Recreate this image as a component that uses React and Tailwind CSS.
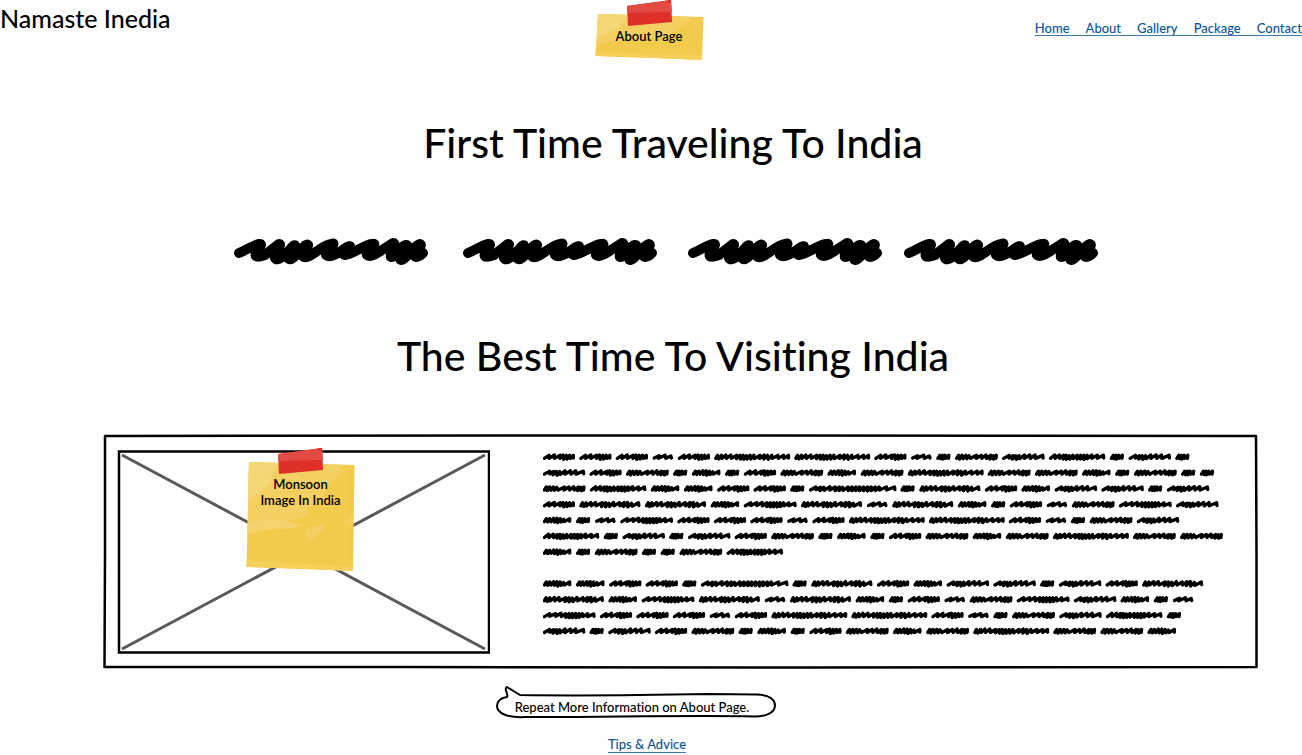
const WORDS = {
  a: { advance: 18.8, points: '4,4 10,-5 12,5 18,-5 19,6 26,-5 27,4 37,-5 36,4' },
  b: { advance: 25.5, points: '5,3 20,-4 18,4 38,-5 40,4 55,-3 57,3' },
  c: { advance: 33.2, points: '4,4 10,-5 14,5 20,-5 24,4 32,-6 34,5 42,-6 44,7 52,-5 54,5 62,-3 64,4 80,-5 80,3' },
  d: { advance: 36.5, points: '4,4 18,-5 18,4 34,-6 34,4 52,-5 51,4 60,-6 62,7 70,-5 72,6 80,-5 82,4 91,-5 91,3' },
  e: { advance: 47.1, points: '4,4 10,-5 13,6 20,-5 24,5 31,-5 35,5 41,-4 46,4 64,-5 63,4 78,-5 80,4 92,-6 94,4 106,-5 104,6 114,-4 115,6 123,-5 122,4' },
  f: { advance: 46.7, points: '4,4 20,-5 20,3 32,-4 30,6 40,-4 42,7 50,-4 52,5 66,-6 66,4 82,-6 84,4 98,-6 99,4 121,-5 122,3' },
  g: { advance: 57.1, points: '4,4 20,-5 20,3 38,-5 38,3 54,-6 55,4 68,-5 68,6 78,-5 78,7 88,-5 88,7 98,-5 99,7 108,-5 109,6 118,-5 120,4 134,-5 134,4 152,-4 153,3' },
  h: { advance: 60.9, points: '4,4 17,-6 18,4 31,-6 32,4 43,-5 42,6 51,-5 52,7 60,-4 62,6 71,-5 72,5 84,-5 84,6 94,-5 94,6 104,-5 104,7 114,-5 114,5 128,-6 128,4 145,-5 145,4 163,-5 164,3' },
  i: { advance: 65.7, points: '4,4 9,-5 13,6 20,-5 22,4 34,-6 36,4 48,-6 50,4 68,-5 66,6 78,-5 78,7 88,-4 90,6 102,-6 104,4 120,-5 121,4 134,-6 132,6 144,-6 145,7 156,-4 158,5 177,-5 178,3' },
  j: { advance: 80, points: '4,4 9,-5 13,6 21,-5 23,4 34,-6 36,4 49,-6 51,4 66,-5 66,5 77,-5 78,6 86,-5 88,7 96,-4 98,6 107,-5 109,6 118,-5 120,5 136,-5 135,4 149,-6 148,6 159,-5 161,7 172,-5 174,4 190,-5 191,4 207,-5 208,4 222,-5 222,3' },
  k: { advance: 91.5, points: '4,4 20,-5 20,3 34,-4 32,6 44,-4 45,5 62,-6 62,4 78,-5 78,6 90,-5 90,6 100,-4 102,5 116,-5 117,6 128,-5 128,6 140,-5 140,6 151,-5 151,6 163,-5 163,6 175,-5 175,7 186,-5 186,6 198,-5 199,6 210,-5 211,4 232,-5 232,4 256,-5 257,3' },
};

const LINES = [
  'dddbdjjdbaefhafa',
  'fdeacadecejeecaeaa',
  'ehccddakaidcffaf',
  'diicgibicadbegf',
  'cabgdddbdjjdbaef',
  'hafafdeacadecejee',
  'caeaaeh',
  '',
  'ccddakaidcffafdi',
  'icgibicadbegfcab',
  'gdddbdjjdbaefha',
  'fafdeacadecejeec',
];

function RedactedCopy() {
  return (
    <svg viewBox="0 0 690 192" className="h-[192px] w-[690px] shrink-0" role="img" aria-label="Scribbled paragraphs">
      <g fill="none" stroke="#000" strokeWidth="10" strokeLinecap="round" strokeLinejoin="round">
        {LINES.map((line, row) => {
          let x = 0;
          return [...line].map((key, n) => {
            const at = x;
            x += WORDS[key].advance;
            return (
              <polyline
                key={`${row}-${n}`}
                points={WORDS[key].points}
                transform={`translate(${at} ${7 + row * 15.83}) scale(0.3333)`}
              />
            );
          });
        })}
      </g>
    </svg>
  );
}

function Scribble() {
  return (
    <svg viewBox="0 0 195 28" className="h-7 w-[195px]" role="img" aria-label="Scribbled text">
      <path
        d="M5 16 C12 13 20 8 25 7 C30 6 24 12 22 16 C20 21 25 20 31 18 L45 7 C49 6 40 17 41 21 C43 25 50 20 59 9 C66 5 52 19 55 22 C59 24 66 12 72 8 C79 5 66 18 70 20 C76 22 88 8 97 7 C105 4 91 15 92 18 C95 21 104 17 113 10 C122 6 106 17 111 18 C119 17 130 8 138 7 C146 5 131 15 133 18 C137 22 149 12 159 6 C164 6 155 18 157 20 C161 21 166 9 172 8 C178 8 163 22 167 23 C171 24 180 8 186 7 C190 8 178 19 182 20 C186 20 188 17 189 16"
        fill="none"
        stroke="#000"
        strokeWidth="10"
        strokeLinecap="round"
        strokeLinejoin="round"
      />
      <path d="M44 12 L80 11 L70 20 L50 21 Z M88 14 L100 11 L94 18 Z M156 13 L188 12 L182 20 L160 20 Z" fill="#000" />
    </svg>
  );
}

function Tape() {
  return (
    <>
      <path d="M32 6 L76 0 L77 22 L33 26 Z" fill="#de3028" />
      <path d="M32 6 L76 0 L77 12 L32 13 Z" fill="#e24a43" />
      <path d="M70 1 L76 0 L76.200 3 Z" fill="#d82c25" />
    </>
  );
}

function Note({ tall, children }) {
  return (
    <div className={tall ? 'relative h-[124px] w-[109px]' : 'relative h-[61px] w-[109px]'}>
      {tall ? (
        <svg viewBox="0 0 109 124" className="absolute inset-0 h-full w-full" aria-hidden="true">
          <path d="M3 14 L108.500 17 L107 123 L60 121 L0.500 119 L2 60 Z" fill="#f2ca4c" />
          <path d="M3 14 L97 17 C91 23 99 28 86 33 C77 43 82 49 70 54 C52 62 74 66 51 71 C30 73 23 79 1.500 80 Z" fill="#f4cf61" />
          <path d="M3 14 L34 15 C22 28 30 34 13 44 L2 52 Z" fill="#f6d777" />
          <path d="M2 76 C26 63 44 77 58 76 C41 84 28 78 1 86 Z" fill="#f5d36c" />
          <path d="M59 87 C60 80 67 77 77 77 C84 79 72 83 69 90 C65 94 60 92 59 87 Z" fill="#f4cf61" />
          <path d="M96 75 L107 68 L107 78 Z M0.500 113 L107 118 L107 123 L60 121 L0.500 119 Z" fill="#f5d05a" />
          <path d="M99 17 V120" stroke="#f5d05a" strokeWidth="1" />
          <Tape />
        </svg>
      ) : (
        <svg viewBox="0 0 109 61" className="absolute inset-0 h-full w-full" aria-hidden="true">
          <path d="M3 14 L108.500 17 L107 60 L60 58 L0.500 56 Z" fill="#f2ca4c" />
          <path d="M3 14 L97 17 C91 20 99 23 84 27 C77 32 81 36 66 37 C46 40 33 39 1.500 44 Z" fill="#f4cf61" />
          <path d="M3 14 L34 15 C22 25 30 28 13 33 L2 38 Z" fill="#f6d777" />
          <path d="M0.500 52 L107 55 L107 60 L60 58 L0.500 56 Z" fill="#f5d05a" />
          <path d="M99 17 V58" stroke="#f5d05a" strokeWidth="1" />
          <Tape />
        </svg>
      )}
      <p className="relative pt-7 text-center text-[13px] leading-4 font-semibold">{children}</p>
    </div>
  );
}

const NAV = ['Home', 'About', 'Gallery', 'Package', 'Contact'];

export default function App() {
  return (
    <div className="min-h-screen bg-white font-['Lato','Noto_Sans',sans-serif] font-medium text-black [font-variant-ligatures:none]">
      <header className="grid grid-cols-[1fr_auto_1fr] items-start">
        <p className="pt-1 text-[25px] leading-7">Namaste Inedia</p>
        <div className="pr-1">
          <Note>About Page</Note>
        </div>
        <nav className="mt-5 flex gap-4 justify-self-end border-b border-[#3f79ac] pt-px text-[13px] leading-[14px] text-[#0b5394]" aria-label="Main">
          {NAV.map((item) => (
            <a key={item} href={`#${item.toLowerCase()}`}>{item}</a>
          ))}
        </nav>
      </header>

      <main>
        <h1 className="mt-14 pl-11 text-center text-[41px] leading-[52px]">First Time Traveling To India</h1>

        <div className="mt-[68px] grid grid-cols-[229px_225px_216px_195px] justify-center pl-[30px]">
          <Scribble />
          <Scribble />
          <Scribble />
          <Scribble />
        </div>

        <h2 className="mt-[65px] pl-11 text-center text-[41px] leading-[52px]">The Best Time To Visiting India</h2>

        <section className="relative mt-[52px] mr-11 ml-[103px] flex gap-[53px] px-[14px] pt-4 pb-[15px]">
          <svg viewBox="0 0 1155 235" preserveAspectRatio="none" className="absolute inset-0 h-full w-full" aria-hidden="true">
            <path
              d="M2 2 L500 1.500 L1153 2 L1153.500 120 L1153.500 233 L700 233.500 L300 233 L1.500 233 L2 120 Z"
              fill="none"
              stroke="#000"
              strokeWidth="2.500"
              strokeLinejoin="round"
            />
          </svg>
          <figure className="relative flex h-[204px] w-[373px] shrink-0 justify-center">
            <svg viewBox="0 0 373 204" className="absolute inset-0 h-full w-full" aria-hidden="true">
              <path d="M5 5 L368 199 M5 199 L368 5" stroke="#595959" strokeWidth="3" />
              <path d="M2 1.500 H372 V202.500 H2 Z" fill="none" stroke="#000" strokeWidth="2.500" />
            </svg>
            <div className="-mt-[2px] -ml-[6px]">
              <Note tall>
                Monsoon
                <br />
                Image In India
              </Note>
            </div>
          </figure>
          <RedactedCopy />
        </section>

        <div className="flex flex-col items-center pt-4">
          <div className="relative mr-[30px] h-[34px] w-[282px]">
            <svg viewBox="0 0 282 34" className="absolute inset-0 h-full w-full" aria-hidden="true">
              <path
                d="M12 12 C14 9 8 4 12 2 L25 10 C90 11 160 10 215 9 L262 9.500 C275 10 280 15 280 20.500 C280 28 270 31.500 260 31.500 C190 30 100 32.500 30 32 C12 33 2 28 2 21 C2 16 6 13 12 12 Z"
                fill="#fff"
                stroke="#000"
                strokeWidth="2"
                strokeLinejoin="round"
              />
            </svg>
            <p className="relative pt-[14px] pr-2 text-center text-[13px] leading-4">Repeat More Information on About Page.</p>
          </div>
          <a href="#tips" className="mt-[18px] mr-2 border-b border-[#3f79ac] text-[13px] leading-[15px] text-[#0b5394]">
            Tips &amp; Advice
          </a>
        </div>
      </main>
    </div>
  );
}
